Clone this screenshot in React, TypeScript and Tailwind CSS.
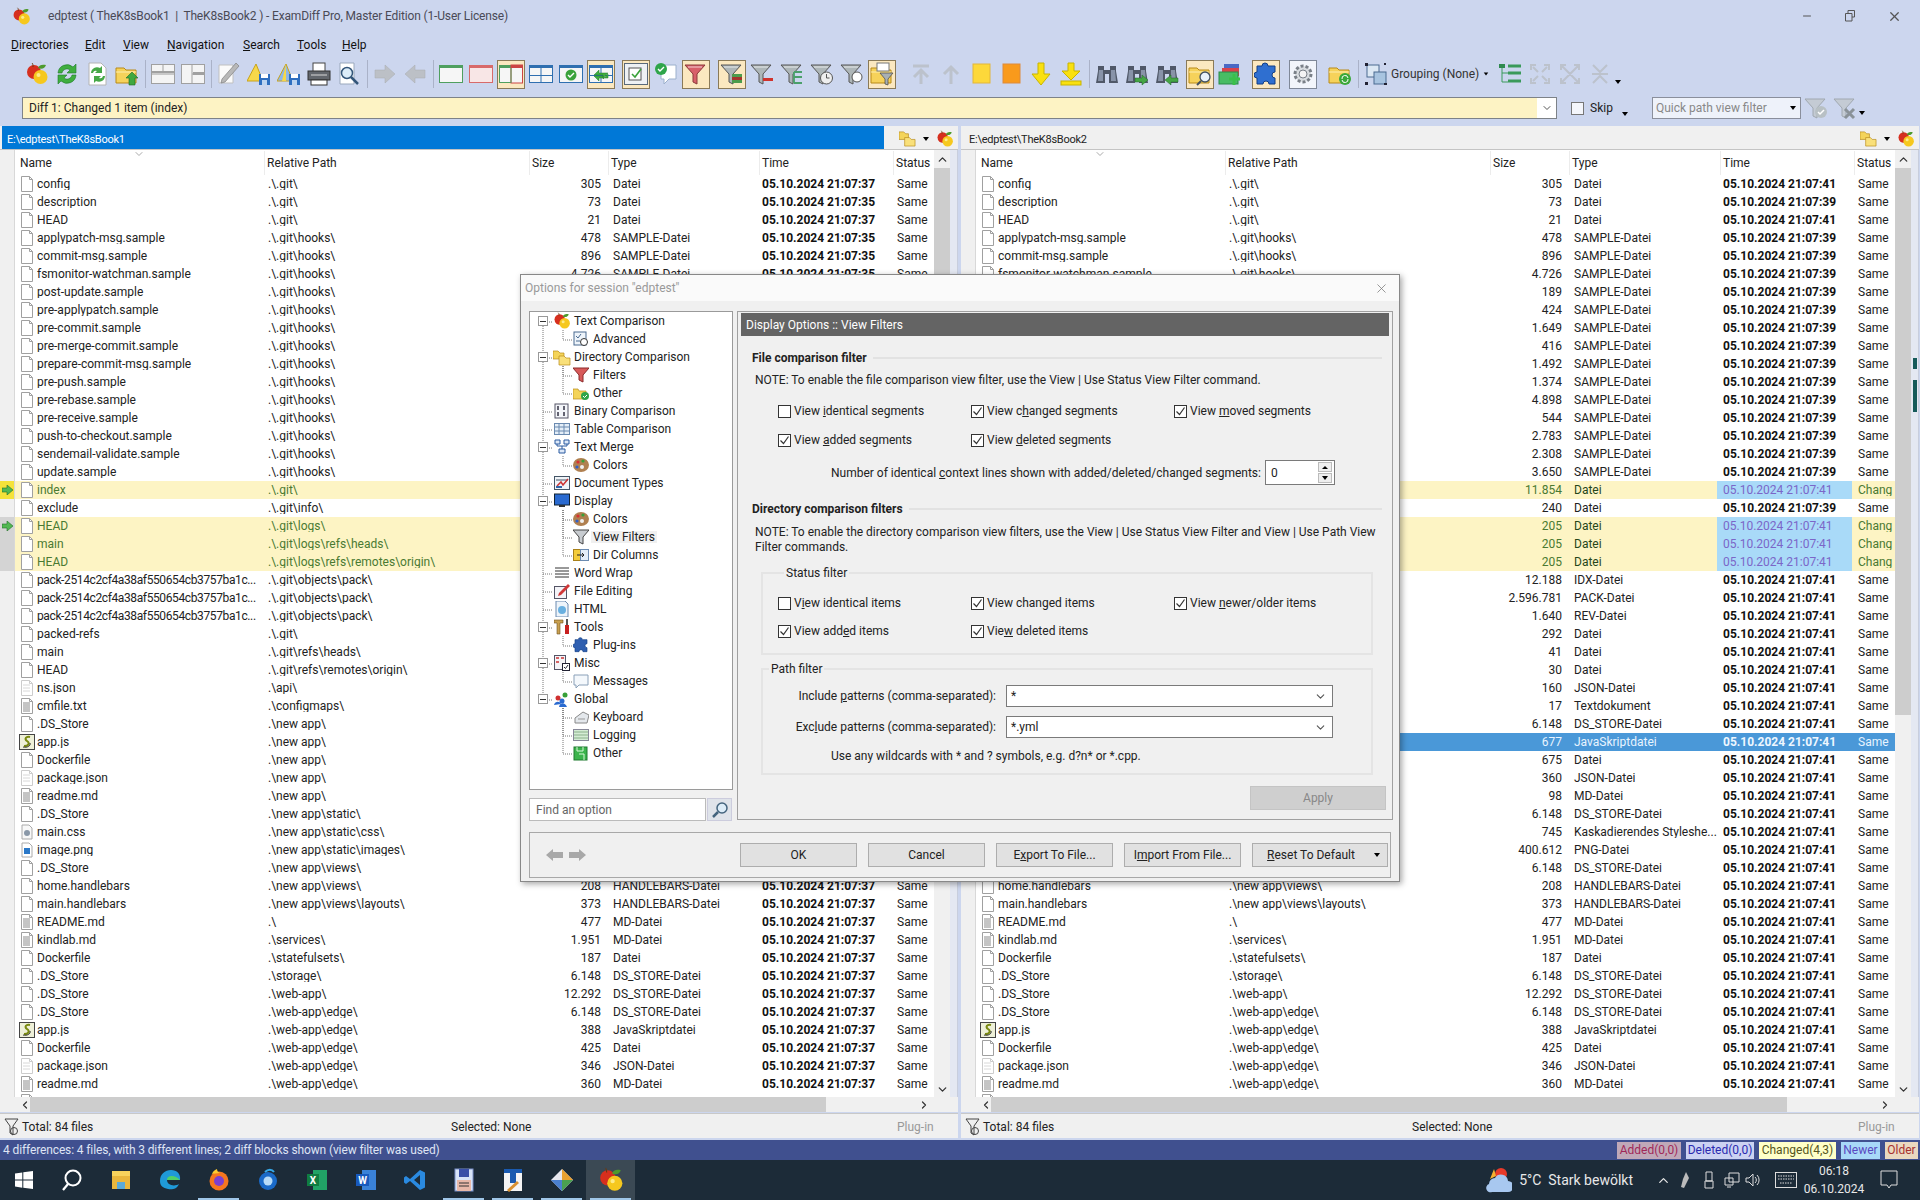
import React from "react";
import { ChevronDown, ChevronLeft, ChevronRight, ChevronUp, Minus, X } from "lucide-react";

type Row = { name: string; path: string; size: string; type: string; t1: string; t2: string; status?: string; icon?: string };

const S = "SAMPLE-Datei";
const rows: Row[] = [
  { name: "config", path: ".\\.git\\", size: "305", type: "Datei", t1: "37", t2: "41" },
  { name: "description", path: ".\\.git\\", size: "73", type: "Datei", t1: "35", t2: "39" },
  { name: "HEAD", path: ".\\.git\\", size: "21", type: "Datei", t1: "37", t2: "41" },
  { name: "applypatch-msg.sample", path: ".\\.git\\hooks\\", size: "478", type: S, t1: "35", t2: "39" },
  { name: "commit-msg.sample", path: ".\\.git\\hooks\\", size: "896", type: S, t1: "35", t2: "39" },
  { name: "fsmonitor-watchman.sample", path: ".\\.git\\hooks\\", size: "4.726", type: S, t1: "35", t2: "39" },
  { name: "post-update.sample", path: ".\\.git\\hooks\\", size: "189", type: S, t1: "35", t2: "39" },
  { name: "pre-applypatch.sample", path: ".\\.git\\hooks\\", size: "424", type: S, t1: "35", t2: "39" },
  { name: "pre-commit.sample", path: ".\\.git\\hooks\\", size: "1.649", type: S, t1: "35", t2: "39" },
  { name: "pre-merge-commit.sample", path: ".\\.git\\hooks\\", size: "416", type: S, t1: "35", t2: "39" },
  { name: "prepare-commit-msg.sample", path: ".\\.git\\hooks\\", size: "1.492", type: S, t1: "35", t2: "39" },
  { name: "pre-push.sample", path: ".\\.git\\hooks\\", size: "1.374", type: S, t1: "35", t2: "39" },
  { name: "pre-rebase.sample", path: ".\\.git\\hooks\\", size: "4.898", type: S, t1: "35", t2: "39" },
  { name: "pre-receive.sample", path: ".\\.git\\hooks\\", size: "544", type: S, t1: "35", t2: "39" },
  { name: "push-to-checkout.sample", path: ".\\.git\\hooks\\", size: "2.783", type: S, t1: "35", t2: "39" },
  { name: "sendemail-validate.sample", path: ".\\.git\\hooks\\", size: "2.308", type: S, t1: "35", t2: "39" },
  { name: "update.sample", path: ".\\.git\\hooks\\", size: "3.650", type: S, t1: "35", t2: "39" },
  { name: "index", path: ".\\.git\\", size: "11.854", type: "Datei", t1: "37", t2: "41", status: "c" },
  { name: "exclude", path: ".\\.git\\info\\", size: "240", type: "Datei", t1: "35", t2: "39" },
  { name: "HEAD", path: ".\\.git\\logs\\", size: "205", type: "Datei", t1: "37", t2: "41", status: "c" },
  { name: "main", path: ".\\.git\\logs\\refs\\heads\\", size: "205", type: "Datei", t1: "37", t2: "41", status: "c" },
  { name: "HEAD", path: ".\\.git\\logs\\refs\\remotes\\origin\\", size: "205", type: "Datei", t1: "37", t2: "41", status: "c" },
  { name: "pack-2514c2cf4a38af550654cb3757ba1c...", path: ".\\.git\\objects\\pack\\", size: "12.188", type: "IDX-Datei", t1: "37", t2: "41" },
  { name: "pack-2514c2cf4a38af550654cb3757ba1c...", path: ".\\.git\\objects\\pack\\", size: "2.596.781", type: "PACK-Datei", t1: "37", t2: "41" },
  { name: "pack-2514c2cf4a38af550654cb3757ba1c...", path: ".\\.git\\objects\\pack\\", size: "1.640", type: "REV-Datei", t1: "37", t2: "41" },
  { name: "packed-refs", path: ".\\.git\\", size: "292", type: "Datei", t1: "37", t2: "41" },
  { name: "main", path: ".\\.git\\refs\\heads\\", size: "41", type: "Datei", t1: "37", t2: "41" },
  { name: "HEAD", path: ".\\.git\\refs\\remotes\\origin\\", size: "30", type: "Datei", t1: "37", t2: "41" },
  { name: "ns.json", path: ".\\api\\", size: "160", type: "JSON-Datei", t1: "37", t2: "41", icon: "faint" },
  { name: "cmfile.txt", path: ".\\configmaps\\", size: "17", type: "Textdokument", t1: "37", t2: "41", icon: "text" },
  { name: ".DS_Store", path: ".\\new app\\", size: "6.148", type: "DS_STORE-Datei", t1: "37", t2: "41" },
  { name: "app.js", path: ".\\new app\\", size: "677", type: "JavaSkriptdatei", t1: "37", t2: "41", icon: "js", status: "s" },
  { name: "Dockerfile", path: ".\\new app\\", size: "675", type: "Datei", t1: "37", t2: "41" },
  { name: "package.json", path: ".\\new app\\", size: "360", type: "JSON-Datei", t1: "37", t2: "41", icon: "faint" },
  { name: "readme.md", path: ".\\new app\\", size: "98", type: "MD-Datei", t1: "37", t2: "41", icon: "text" },
  { name: ".DS_Store", path: ".\\new app\\static\\", size: "6.148", type: "DS_STORE-Datei", t1: "37", t2: "41" },
  { name: "main.css", path: ".\\new app\\static\\css\\", size: "745", type: "Kaskadierendes Styleshe...", t1: "37", t2: "41", icon: "css" },
  { name: "image.png", path: ".\\new app\\static\\images\\", size: "400.612", type: "PNG-Datei", t1: "37", t2: "41", icon: "image" },
  { name: ".DS_Store", path: ".\\new app\\views\\", size: "6.148", type: "DS_STORE-Datei", t1: "37", t2: "41" },
  { name: "home.handlebars", path: ".\\new app\\views\\", size: "208", type: "HANDLEBARS-Datei", t1: "37", t2: "41" },
  { name: "main.handlebars", path: ".\\new app\\views\\layouts\\", size: "373", type: "HANDLEBARS-Datei", t1: "37", t2: "41" },
  { name: "README.md", path: ".\\", size: "477", type: "MD-Datei", t1: "37", t2: "41", icon: "text" },
  { name: "kindlab.md", path: ".\\services\\", size: "1.951", type: "MD-Datei", t1: "37", t2: "41", icon: "text" },
  { name: "Dockerfile", path: ".\\statefulsets\\", size: "187", type: "Datei", t1: "37", t2: "41" },
  { name: ".DS_Store", path: ".\\storage\\", size: "6.148", type: "DS_STORE-Datei", t1: "37", t2: "41" },
  { name: ".DS_Store", path: ".\\web-app\\", size: "12.292", type: "DS_STORE-Datei", t1: "37", t2: "41" },
  { name: ".DS_Store", path: ".\\web-app\\edge\\", size: "6.148", type: "DS_STORE-Datei", t1: "37", t2: "41" },
  { name: "app.js", path: ".\\web-app\\edge\\", size: "388", type: "JavaSkriptdatei", t1: "37", t2: "41", icon: "js" },
  { name: "Dockerfile", path: ".\\web-app\\edge\\", size: "425", type: "Datei", t1: "37", t2: "41" },
  { name: "package.json", path: ".\\web-app\\edge\\", size: "346", type: "JSON-Datei", t1: "37", t2: "41", icon: "faint" },
  { name: "readme.md", path: ".\\web-app\\edge\\", size: "360", type: "MD-Datei", t1: "37", t2: "41", icon: "text" },
  { name: "", path: "", size: "", type: "", t1: "", t2: "" },
];

const Apples = ({ s = 24 }: { s?: number }) => (
  <svg width={s} height={s} viewBox="0 0 24 24">
    <circle cx="9" cy="10" r="7" fill="#d62f1e" />
    <circle cx="15.5" cy="15" r="7" fill="#f6c81e" />
    <circle cx="13.5" cy="13" r="2" fill="#fdeb8a" />
    <path d="M13 6c1-3 4-4 8-3-1 3-4 5-8 3z" fill="#4d9a2c" />
    <path d="M8 5c0-2 0-3-1-4" stroke="#6b3a12" fill="none" />
  </svg>
);

const Pane = ({ a = "#4f9f5f", b, split, bg = "#f6f6f6", children }: { a?: string; b?: string; split?: "v" | "h" | "c"; bg?: string; children?: React.ReactNode }) => (
  <svg width="24" height="24" viewBox="0 0 24 24">
    <rect x="0.5" y="3.5" width="23" height="17" fill={bg} stroke={a} />
    <rect x="1" y="3" width="22" height="3" fill={a} />
    {b && <rect x="12" y="3" width="11.5" height="18" fill={bg} stroke={b} />}
    {b && <rect x="12" y="3" width="12" height="3" fill={b} />}
    {split === "v" && <path d="M12 6v15" stroke={a} />}
    {split === "h" && <path d="M0 13.5h24" stroke={a} />}
    {split === "c" && <path d="M12 6v15M0 13.5h24" stroke={a} />}
    {children}
  </svg>
);

const Funnel = ({ fill = "#aeb6b8", line = "#555", children }: { fill?: string; line?: string; children?: React.ReactNode }) => (
  <svg width="24" height="24" viewBox="0 0 24 24">
    <path d="M1 3h20l-8 9v10l-4-2v-8z" fill={fill} stroke={line} />
    <path d="M4 5h14" stroke="#fff" strokeOpacity=".7" />
    {children}
  </svg>
);

const Folder = ({ children }: { children?: React.ReactNode }) => (
  <svg width="24" height="24" viewBox="0 0 24 24">
    <path d="M1 6h8l2 2h10v13H1z" fill="#f6d25a" stroke="#b88a18" />
    <path d="M1 10h20" stroke="#fdeeb0" />
    {children}
  </svg>
);

const BlockArrow = ({ dir, fill }: { dir: "l" | "r" | "u" | "d"; fill: string }) => {
  const rot = { l: 180, r: 0, u: 270, d: 90 }[dir];
  return (
    <svg width="24" height="24" viewBox="0 0 24 24">
      <path d="M2 8h10V3l10 9-10 9v-5H2z" fill={fill} stroke="#a8acb0" strokeOpacity=".5" transform={`rotate(${rot} 12 12)`} />
    </svg>
  );
};

const Binoc = ({ arrow }: { arrow?: "r" | "l" }) => (
  <svg width="24" height="24" viewBox="0 0 24 24">
    <path d="M3 4h6v4h6V4h6v5l2 12h-9v-9h-4v9H1l2-12z" fill="#505868" />
    <path d="M4 8h4v11H3zM16 8h4l1 11h-5z" fill="#8893a8" />
    {arrow === "r" && <path d="M10 16h7v-3l6 5-6 5v-3h-7z" fill="#45a545" stroke="#1f6a24" strokeWidth=".5" />}
    {arrow === "l" && <path d="M23 16h-7v-3l-6 5 6 5v-3h7z" fill="#45a545" stroke="#1f6a24" strokeWidth=".5" />}
  </svg>
);

const Gray = ({ d, w = 3 }: { d: string; w?: number }) => (
  <svg width="24" height="24" viewBox="0 0 24 24">
    <path d={d} fill="none" stroke="#bcc2cc" strokeWidth={w} />
  </svg>
);

const icons: Record<string, React.ReactNode> = {
  apples: <Apples />,
  refresh: (
    <svg width="24" height="24" viewBox="0 0 24 24">
      <path d="M3 11a9 9 0 0 1 15-6l3-3v9h-9l3-3a5 5 0 0 0-8 3z" fill="#3fae3f" stroke="#1f7a2a" strokeWidth=".6" />
      <path d="M21 13a9 9 0 0 1-15 6l-3 3v-9h9l-3 3a5 5 0 0 0 8-3z" fill="#3fae3f" stroke="#1f7a2a" strokeWidth=".6" />
    </svg>
  ),
  docRefresh: (
    <svg width="24" height="24" viewBox="0 0 24 24">
      <path d="M4 1h12l5 5v17H4z" fill="#fff" stroke="#b4b4b4" />
      <path d="M6 11a6 6 0 0 1 9-5l2-2v7h-7l2-2a3 3 0 0 0-4 2z" fill="#46a846" />
      <path d="M20 14a6 6 0 0 1-9 5l-2 2v-7h7l-2 2a3 3 0 0 0 4-2z" fill="#46a846" />
    </svg>
  ),
  folderUp: (
    <Folder>
      <path d="M17 10l6 6h-3v7h-6v-7h-3z" fill="#3fa83f" stroke="#1f6a24" strokeWidth=".6" />
    </Folder>
  ),
  panesH: (
    <svg width="24" height="24" viewBox="0 0 24 24">
      <rect x="0.5" y="2.5" width="23" height="19" fill="#f4f4f4" stroke="#a0a0a0" />
      <path d="M0 10h24" stroke="#a0a0a0" strokeWidth="2" />
      <path d="M12 2v8" stroke="#a0a0a0" />
      <rect x="1" y="11" width="22" height="2" fill="#c8c8c8" />
    </svg>
  ),
  panesV: (
    <svg width="24" height="24" viewBox="0 0 24 24">
      <rect x="0.5" y="2.5" width="23" height="19" fill="#f4f4f4" stroke="#a0a0a0" />
      <path d="M11 2v20M11 12h13" stroke="#a0a0a0" />
      <rect x="12" y="10" width="11" height="3" fill="#a0a0a0" />
    </svg>
  ),
  pencil: (
    <svg width="24" height="24" viewBox="0 0 24 24">
      <path d="M2 3h14v18H2z" fill="#fafafa" stroke="#c0c0c0" />
      <path d="M19 1l3 3L8 20l-4 1 1-4z" fill="#b8b8b8" stroke="#808080" strokeWidth=".7" />
    </svg>
  ),
  warnSave: (
    <svg width="24" height="24" viewBox="0 0 24 24">
      <path d="M9 2L0 19h16z" fill="#f7d84a" stroke="#c8a21a" />
      <rect x="12" y="12" width="11" height="11" fill="#2f6fc0" />
      <rect x="14" y="12" width="7" height="4" fill="#fff" />
      <rect x="15" y="18" width="5" height="5" fill="#bcd4f0" />
    </svg>
  ),
  warnSave2: (
    <svg width="24" height="24" viewBox="0 0 24 24">
      <path d="M9 2L0 19h16z" fill="#8fb7e8" stroke="#c8a21a" />
      <path d="M9 2L5 19h4z" fill="#f7d84a" />
      <rect x="12" y="12" width="11" height="11" fill="#2f6fc0" />
      <rect x="14" y="12" width="7" height="4" fill="#fff" />
      <rect x="15" y="18" width="5" height="5" fill="#bcd4f0" />
    </svg>
  ),
  printer: (
    <svg width="24" height="24" viewBox="0 0 24 24">
      <rect x="6" y="1" width="12" height="9" fill="#fff" stroke="#444" />
      <rect x="1" y="9" width="22" height="9" fill="#62666c" stroke="#333" />
      <rect x="4" y="18" width="16" height="5" fill="#fff" stroke="#333" />
      <path d="M4 13h16" stroke="#d8d8d8" />
    </svg>
  ),
  preview: (
    <svg width="24" height="24" viewBox="0 0 24 24">
      <path d="M3 1h14v21H3z" fill="#fff" stroke="#9aa8bc" />
      <circle cx="10" cy="11" r="5.5" fill="#dcecf8" stroke="#34567a" strokeWidth="1.5" />
      <path d="M14 15l7 7" stroke="#34567a" strokeWidth="2.5" />
    </svg>
  ),
  arrowR: <BlockArrow dir="r" fill="#bcc0c6" />,
  arrowL: <BlockArrow dir="l" fill="#bcc0c6" />,
  paneGreen: <Pane />,
  paneRed: <Pane a="#d86a6a" bg="#f8e6e6" />,
  paneBoth: <Pane b="#c44" split="v" />,
  paneBlue: <Pane a="#2f6fb0" split="c" />,
  paneCheck: (
    <Pane a="#2f6fb0">
      <circle cx="12" cy="13" r="5.5" fill="#3aa23a" />
      <path d="M9 13l2 2 4-4" stroke="#fff" fill="none" strokeWidth="1.4" />
    </Pane>
  ),
  paneSwap: (
    <Pane a="#2f6fb0" split="c">
      <path d="M5 13l5-5v3h9l-5 5v-3z" fill="#3fae3f" stroke="#1f7a2a" strokeWidth=".5" />
      <path d="M19 12l-5 5v-3H5l5 5v-3h9z" fill="#3fae3f" stroke="#1f7a2a" strokeWidth=".5" />
    </Pane>
  ),
  paneDoc: (
    <svg width="24" height="24" viewBox="0 0 24 24">
      <rect x="0.5" y="1.5" width="23" height="21" fill="#eef1f4" stroke="#5a6a7a" />
      <rect x="5" y="6" width="12" height="12" fill="#fff" stroke="#555" />
      <path d="M8 12l3 3 6-8" fill="none" stroke="#3aa23a" strokeWidth="1.6" />
    </svg>
  ),
  speech: (
    <svg width="24" height="24" viewBox="0 0 24 24">
      <path d="M7 3h15v14h-7l-5 5v-5H7z" fill="#fff" stroke="#9cb0cc" />
      <circle cx="7" cy="7" r="6" fill="#2fa54a" />
      <path d="M4 7l2 2 4-4" stroke="#fff" fill="none" strokeWidth="1.4" />
    </svg>
  ),
  funnelRed: <Funnel fill="#d8606a" line="#8a3a3a" />,
  funnelMinus: (
    <Funnel>
      <rect x="12" y="12" width="10" height="3" fill="#4c9c4c" />
      <rect x="12" y="15" width="10" height="3" fill="#a5352c" />
      <rect x="12" y="18" width="10" height="3" fill="#4c9c4c" />
    </Funnel>
  ),
  funnelDel: (
    <Funnel>
      <rect x="13" y="16" width="10" height="3" fill="#d0322c" />
    </Funnel>
  ),
  funnelE: (
    <Funnel>
      <path d="M14 10h8M14 15h8M14 21h8M14 10v11" stroke="#4ba06a" strokeWidth="1.8" fill="none" />
    </Funnel>
  ),
  funnelClock: (
    <Funnel>
      <circle cx="16.5" cy="16" r="6" fill="#eee" stroke="#555" />
      <path d="M16.5 12v4h3" stroke="#555" fill="none" />
    </Funnel>
  ),
  funnelO: (
    <Funnel>
      <circle cx="17" cy="15" r="5" fill="#fff" stroke="#555" />
    </Funnel>
  ),
  funnelCheck: (
    <svg width="24" height="24" viewBox="0 0 24 24">
      <path d="M1 3h20l-8 9v10l-4-2v-8z" fill="#c4cbd4" stroke="#a0a8b0" />
      <circle cx="17" cy="16" r="6" fill="#b8c0c4" />
      <path d="M14 16l2 2 4-4" stroke="#fff" fill="none" strokeWidth="1.5" />
    </svg>
  ),
  funnelX: (
    <svg width="24" height="24" viewBox="0 0 24 24">
      <path d="M1 3h20l-8 9v10l-4-2v-8z" fill="#c4cbd4" stroke="#a0a8b0" />
      <path d="M12 13l9 9m0-9l-9 9" stroke="#8a9298" strokeWidth="3" />
    </svg>
  ),
  folderFunnel: (
    <Folder>
      <rect x="7" y="1" width="12" height="8" fill="#fff" stroke="#777" />
      <path d="M10 11h13l-5 6v6l-3-1v-5z" fill="#a8b0b4" stroke="#444" strokeWidth=".7" />
    </Folder>
  ),
  upTop: <Gray d="M4 4h16M12 22V9M5 15l7-7 7 7" />,
  up: <Gray d="M12 22V5M5 12l7-7 7 7" />,
  squareY: (
    <svg width="24" height="24" viewBox="0 0 24 24">
      <rect x="4" y="2" width="17" height="19" fill="#fdd83a" stroke="#e2b63a" />
    </svg>
  ),
  squareO: (
    <svg width="24" height="24" viewBox="0 0 24 24">
      <rect x="4" y="2" width="17" height="19" fill="#f99a1c" stroke="#dd8a3a" />
    </svg>
  ),
  downY: (
    <svg width="24" height="24" viewBox="0 0 24 24">
      <path d="M9 1h6v11h6l-9 11-9-11h6z" fill="#f9e010" stroke="#c8b400" />
    </svg>
  ),
  downBottomY: (
    <svg width="24" height="24" viewBox="0 0 24 24">
      <path d="M9 1h6v8h6l-9 9-9-9h6z" fill="#f9e010" stroke="#c8b400" />
      <rect x="2" y="19" width="20" height="4" fill="#f9e010" stroke="#c8b400" />
    </svg>
  ),
  binoc: <Binoc />,
  binocR: <Binoc arrow="r" />,
  binocL: <Binoc arrow="l" />,
  folderFind: (
    <Folder>
      <circle cx="17" cy="15" r="5" fill="#e8f2fa" stroke="#405060" strokeWidth="1.3" />
      <path d="M13 19l-4 4" stroke="#405060" strokeWidth="2" />
    </Folder>
  ),
  foldersPlus: (
    <svg width="24" height="24" viewBox="0 0 24 24">
      <rect x="6" y="2" width="15" height="8" fill="#4a68c4" />
      <rect x="4" y="6" width="17" height="8" fill="#d8424c" />
      <rect x="1" y="10" width="19" height="12" fill="#48bc64" stroke="#2a8a48" />
      <path d="M16 12v11M11 17h11" stroke="#3ac04a" strokeWidth="3" />
    </svg>
  ),
  puzzle: (
    <svg width="24" height="24" viewBox="0 0 24 24">
      <path d="M3 4h5a3 3 0 1 1 6 0h7v6a3 3 0 1 0 0 6v6h-6a3 3 0 1 0-6 0H3v-6a3 3 0 1 1 0-6z" fill="#2f6fd0" stroke="#123f86" />
    </svg>
  ),
  gear: (
    <svg width="24" height="24" viewBox="0 0 24 24">
      <circle cx="12" cy="12" r="8" fill="#d8dce0" stroke="#7a8088" strokeWidth="3" strokeDasharray="3 2" />
      <circle cx="12" cy="12" r="4" fill="#f4f4f4" stroke="#7a8088" />
    </svg>
  ),
  folderRefresh: (
    <Folder>
      <circle cx="17" cy="17" r="6" fill="#3aa83a" />
      <path d="M14 17a3 3 0 0 1 6-1M20 17a3 3 0 0 1-6 1" stroke="#fff" fill="none" />
    </Folder>
  ),
  grouping: (
    <svg width="24" height="24" viewBox="0 0 24 24">
      <rect x="3" y="3" width="12" height="12" fill="#dce8f4" stroke="#4a6a90" />
      <rect x="10" y="10" width="12" height="12" fill="#a8c4e0" stroke="#4a6a90" />
      <path d="M1 1h3v3H1zM20 1h2v2h-2zM1 20h3v3H1zM20 21h3v2h-3z" fill="#223" />
    </svg>
  ),
  listTree: (
    <svg width="24" height="24" viewBox="0 0 24 24">
      <path d="M4 3v17h6M4 11h6" stroke="#3a9a5a" fill="none" />
      <path d="M1 2h6v4H1z" fill="#2f8a4f" />
      <path d="M10 4h13M10 11h13M10 19h13" stroke="#3a9a5a" strokeWidth="3" />
    </svg>
  ),
  expand1: <Gray w={2} d="M3 8V3h5M21 8V3h-5M3 16v5h5M21 16v5h-5M5 5l5 5M19 5l-5 5M5 19l5-5M19 19l-5-5" />,
  expand2: <Gray w={2} d="M3 3l18 18M21 3L3 21M3 8V3h5M21 8V3h-5M3 16v5h5M21 16v5h-5" />,
  expand3: <Gray w={2} d="M5 3l7 7 7-7M5 21l7-7 7 7M4 12h16" />,
};

// small option tree pictures, 16px
const Mini = ({ n }: { n: string }) => {
  const c: Record<string, React.ReactNode> = {
    apples: <Apples s={18} />,
    advanced: (
      <svg width="16" height="16" viewBox="0 0 16 16">
        <rect x="1" y="1" width="12" height="13" fill="#eef4fa" stroke="#4a6a90" />
        <path d="M3 5l2 2 3-4M3 10h4" stroke="#4a6a90" fill="none" />
        <circle cx="11" cy="11" r="3.5" fill="#fff" stroke="#333" />
      </svg>
    ),
    dirs: (
      <svg width="18" height="18" viewBox="0 0 18 18">
        <path d="M0 3h5l2 2h4v6H0z" fill="#f4d45a" stroke="#b88a18" strokeWidth=".7" />
        <path d="M6 8h5l2 2h4v7H6z" fill="#f9e07a" stroke="#b88a18" strokeWidth=".7" />
      </svg>
    ),
    filters: (
      <svg width="16" height="16" viewBox="0 0 16 16">
        <path d="M0 1h16l-6 7v7l-4-2V8z" fill="#d85a5a" stroke="#8a2a2a" />
      </svg>
    ),
    otherFolder: (
      <svg width="16" height="16" viewBox="0 0 16 16">
        <path d="M0 4h5l1 2h7v8H0z" fill="#f4d45a" stroke="#b88a18" strokeWidth=".7" />
        <circle cx="12" cy="11" r="4" fill="#2fa54a" />
        <path d="M10 11l1.5 1.5L14 10" stroke="#fff" fill="none" />
      </svg>
    ),
    binary: (
      <svg width="16" height="16" viewBox="0 0 16 16">
        <rect x="1" y="1" width="13" height="14" fill="#f4f6fa" stroke="#556" />
        <path d="M4 3v4M10 3v4M4 9v4M10 9v4" stroke="#334" strokeWidth="1.5" />
      </svg>
    ),
    table: (
      <svg width="16" height="16" viewBox="0 0 16 16">
        <rect x="0.5" y="2.5" width="15" height="11" fill="#e4eef8" stroke="#6a8ab0" />
        <path d="M5 3v10M10 3v10M0 6h15M0 10h15" stroke="#6a8ab0" />
      </svg>
    ),
    merge: (
      <svg width="16" height="16" viewBox="0 0 16 16">
        <path d="M1 1h5v4H1zM10 1h5v4h-5zM5 10h6v4H5z" fill="#dce8f8" stroke="#2a5aa0" />
        <path d="M3 5v2h10V5M8 7v3" fill="none" stroke="#2a5aa0" />
      </svg>
    ),
    colors: (
      <svg width="16" height="16" viewBox="0 0 16 16">
        <ellipse cx="8" cy="8" rx="8" ry="7" fill="#b08050" />
        <circle cx="5" cy="5" r="1.6" fill="#d83030" />
        <circle cx="10" cy="4" r="1.6" fill="#38a038" />
        <circle cx="4" cy="10" r="1.6" fill="#3060c8" />
        <circle cx="9" cy="10" r="2" fill="#f0f0f0" />
      </svg>
    ),
    docTypes: (
      <svg width="16" height="16" viewBox="0 0 16 16">
        <rect x="0.5" y="1.5" width="15" height="13" fill="#f0f4f8" stroke="#456" />
        <path d="M2 5h12" stroke="#456" />
        <path d="M3 11l4-4 2 3 5-6" stroke="#c33" fill="none" strokeWidth="1.5" />
        <rect x="2" y="11" width="6" height="2" fill="#36a" />
      </svg>
    ),
    display: (
      <svg width="16" height="16" viewBox="0 0 16 16">
        <rect x="0.5" y="1" width="15" height="11" fill="#2a6ad0" stroke="#123" />
        <rect x="5" y="12" width="6" height="2" fill="#333" />
      </svg>
    ),
    viewFilters: (
      <svg width="16" height="16" viewBox="0 0 16 16">
        <path d="M0 1h16l-6 7v7l-4-2V8z" fill="#c8ccd0" stroke="#444" />
      </svg>
    ),
    columns: (
      <svg width="16" height="16" viewBox="0 0 16 16">
        <rect x="0.5" y="2.5" width="7" height="11" fill="#f4cc3a" stroke="#a8801a" />
        <rect x="7.5" y="2.5" width="8" height="11" fill="#e4eef8" stroke="#6a8ab0" />
        <path d="M4 8h7m-2-2l2 2-2 2" stroke="#222" fill="none" />
      </svg>
    ),
    wrap: (
      <svg width="16" height="16" viewBox="0 0 16 16">
        <path d="M1 3h14M1 6h14M1 9h14M1 12h14" stroke="#333" />
      </svg>
    ),
    edit: (
      <svg width="16" height="16" viewBox="0 0 16 16">
        <rect x="0.5" y="3.5" width="12" height="12" fill="#f4f4f8" stroke="#556" />
        <path d="M14 1l2 2-9 9-3 1 1-3z" fill="#d03838" />
      </svg>
    ),
    html: (
      <svg width="16" height="16" viewBox="0 0 16 16">
        <path d="M2 0h9l3 3v13H2z" fill="#eef4fa" stroke="#6a8ab0" />
        <circle cx="8" cy="9" r="4" fill="#6ab0e0" />
      </svg>
    ),
    tools: (
      <svg width="16" height="16" viewBox="0 0 16 16">
        <path d="M0 1h9v3H6v11H3V4H0z" fill="#c8a050" stroke="#705020" strokeWidth=".6" />
        <rect x="12" y="0" width="2" height="6" fill="#555" />
        <rect x="11" y="6" width="4" height="9" fill="#c82020" />
      </svg>
    ),
    plug: (
      <svg width="16" height="16" viewBox="0 0 24 24">
        <path d="M3 4h5a3 3 0 1 1 6 0h7v6a3 3 0 1 0 0 6v6h-6a3 3 0 1 0-6 0H3v-6a3 3 0 1 1 0-6z" fill="#2f5fb0" stroke="#123f86" />
      </svg>
    ),
    misc: (
      <svg width="16" height="16" viewBox="0 0 16 16">
        <rect x="0.5" y="0.5" width="11" height="14" fill="#f4f4f8" stroke="#556" />
        <path d="M2 3h3M7 3h3M2 7h3" stroke="#c33" strokeWidth="1.5" />
        <rect x="8.5" y="8.5" width="7" height="7" fill="#fff" stroke="#223" />
        <path d="M10 12l1.5 1.5L14 10" stroke="#223" fill="none" />
      </svg>
    ),
    messages: (
      <svg width="16" height="16" viewBox="0 0 16 16">
        <path d="M1 2h14v10H6l-3 3v-3H1z" fill="#f4f8fc" stroke="#8aa0b8" />
      </svg>
    ),
    global: (
      <svg width="16" height="16" viewBox="0 0 16 16">
        <circle cx="4" cy="7" r="2.5" fill="#d03030" />
        <circle cx="11" cy="4" r="2.5" fill="#38a038" />
        <circle cx="8" cy="10" r="2.5" fill="#2a6ad0" />
        <path d="M0 14c1-4 6-4 7-1M5 16c1-5 6-5 8 0" fill="#2a6ad0" />
      </svg>
    ),
    keyboard: (
      <svg width="16" height="16" viewBox="0 0 16 16">
        <path d="M2 9l8-6 6 3-2 8H2z" fill="#e4e8ec" stroke="#888" />
        <path d="M5 10h7" stroke="#999" />
      </svg>
    ),
    logging: (
      <svg width="16" height="16" viewBox="0 0 16 16">
        <rect x="0.5" y="2.5" width="15" height="11" fill="#d4ecd4" stroke="#889" />
        <path d="M1 5h14M1 8h14M1 11h14" stroke="#8ab08a" />
      </svg>
    ),
    otherGreen: (
      <svg width="16" height="16" viewBox="0 0 16 16">
        <rect x="1" y="2" width="13" height="13" fill="#3cb44c" stroke="#1f7a2f" />
        <path d="M4 2v4h6V2M6 9h5v6" stroke="#d8f8d8" fill="none" />
      </svg>
    ),
  };
  return <>{c[n]}</>;
};

const Tool = ({ n, hl, white }: { n: string; hl?: boolean; white?: boolean }) => (
  <div className="w-[30px] h-[34px] flex items-center justify-center shrink-0">
    <div
      className={
        "w-[28px] h-[29px] flex items-center justify-center " +
        (hl ? "bg-[#fbe8c0] border border-[#8a7a58]" : white ? "bg-[#f2f5fb] border border-[#7f8898]" : "")
      }
    >
      {icons[n]}
    </div>
  </div>
);
const Sep = () => (
  <div className="w-[6px] h-[28px] flex justify-center shrink-0">
    <div className="w-px h-full bg-[#aab2c8]" />
  </div>
);
const Gripper = () => (
  <div className="w-[5px] h-[27px] shrink-0 [background-image:radial-gradient(#7d8496_45%,transparent_50%)] [background-size:2px_2px]" />
);
const Caret = () => <div className="w-0 h-0 border-x-[3.5px] border-x-transparent border-t-[4px] border-t-black shrink-0" />;

const FileIcon = ({ kind }: { kind?: string }) => {
  if (kind === "js")
    return (
      <svg width="16" height="16" viewBox="0 0 16 16">
        <rect x="0.5" y="0.5" width="15" height="15" fill="#eef0d8" stroke="#444" />
        <path d="M11 3C7 2 5 5 8 7s2 5-3 5" fill="none" stroke="#7a8a10" strokeWidth="2" />
        <path d="M4 13c4 1 8-1 7-4" fill="none" stroke="#333" />
      </svg>
    );
  if (kind === "css")
    return (
      <svg width="16" height="16" viewBox="0 0 16 16">
        <path d="M3 1h7l3 3v11H3z" fill="#f8f8f8" stroke="#aaa" />
        <circle cx="8" cy="9" r="3" fill="#8a98a8" />
      </svg>
    );
  if (kind === "image")
    return (
      <svg width="16" height="16" viewBox="0 0 16 16">
        <path d="M3 1h7l3 3v11H3z" fill="#fff" stroke="#aaa" />
        <rect x="5" y="6" width="6" height="6" fill="#2a78c8" />
      </svg>
    );
  return (
    <svg width="16" height="16" viewBox="0 0 16 16">
      <path d="M2.5 0.5h8l3 3v12h-11z" fill="#fff" stroke={kind === "faint" ? "#ccc" : "#a0a0a0"} />
      <path d="M10.5 0.5v3h3" fill="none" stroke={kind === "faint" ? "#ccc" : "#a0a0a0"} />
      {kind === "text" && <path d="M4 5h7M4 7h7M4 9h7M4 11h7M4 13h7" stroke="#8a8a8a" />}
      {kind === "faint" && <path d="M4 5h7M4 8h7M4 11h7" stroke="#d8d8d8" />}
    </svg>
  );
};

const GreenArrow = () => (
  <svg width="11" height="10" viewBox="0 0 11 10">
    <path d="M0 3h5V0l6 5-6 5V7H0z" fill="#52b852" stroke="#24702a" strokeWidth=".6" />
  </svg>
);

const Panel = ({ side }: { side: "l" | "r" }) => {
  const left = side === "l";
  return (
    <div className="w-[958px] flex flex-col shrink-0">
      <div className="h-[24px] flex items-center bg-[#f0f0f0] border-b border-[#c4c4c4]">
        <div
          className={
            "h-full flex items-center pt-[3px] text-[11px] tracking-[-0.25px] " +
            (left ? "bg-[#0078d7] text-white ml-[2px] w-[882px] pl-[5px]" : "w-[884px] text-[#222] pl-[8px]")
          }
        >
          {left ? "E:\\edptest\\TheK8sBook1" : "E:\\edptest\\TheK8sBook2"}
        </div>
        <div className="ml-[15px] flex items-center gap-[7px] pt-[2px]">
          <svg width="17" height="17" viewBox="0 0 18 18">
            <path d="M0 2h5l2 2h3v6H0z" fill="#f4d45a" stroke="#b88a18" strokeWidth=".7" />
            <path d="M6 8h5l2 2h4v7H6z" fill="#f9e07a" stroke="#b88a18" strokeWidth=".7" />
          </svg>
          <Caret />
          <Apples s={18} />
        </div>
      </div>
      <div className="flex-1 flex min-h-0">
        <div className="w-[15px] shrink-0 bg-[#f0f0f0] border-r border-[#d8d8d8] flex flex-col">
          <div className="h-[25px]" />
          <div className="h-[306px]" />
          <div className={"h-[18px] flex items-center justify-center " + (left ? "bg-[#f5e23a]" : "bg-[#f0f0f0]")}>
            {left && <GreenArrow />}
          </div>
          <div className="h-[18px]" />
          <div className="h-[54px] bg-[#d4d4d4] flex items-start justify-center pt-[4px]">{left && <GreenArrow />}</div>
        </div>
        <div className="flex-1 flex flex-col min-w-0 bg-white">
          <div className="h-[25px] flex items-center relative shrink-0 text-[#222] pt-[1px]">
            <div className="w-[250px] pl-[5px] border-r border-[#ececec] h-full flex items-center">Name</div>
            <div className="w-[265px] pl-[2px] border-r border-[#ececec] h-full flex items-center">Relative Path</div>
            <div className="w-[79px] pl-[2px] border-r border-[#ececec] h-full flex items-center">Size</div>
            <div className="w-[151px] pl-[2px] border-r border-[#ececec] h-full flex items-center">Type</div>
            <div className="w-[134px] pl-[2px] border-r border-[#ececec] h-full flex items-center">Time</div>
            <div className="pl-[2px]">Status</div>
            <ChevronDown size={12} className="absolute left-[118px] top-[-2px] text-[#aaa]" />
          </div>
          <div className="h-[923px] overflow-hidden">
            {rows.map((r, i) => {
              const changed = r.status === "c";
              const sel = !left && r.status === "s";
              return (
                <div
                  key={i}
                  className={
                    "h-[18px] flex items-center w-[919px] whitespace-nowrap " +
                    (sel ? "bg-[#4a98d8] text-[#e8f4ff] " : changed ? "bg-[#fdf4c4] " : "") +
                    (changed ? "text-[#4a7a32]" : sel ? "" : "text-[#222]")
                  }
                >
                  <div className="w-[20px] flex justify-center shrink-0 pl-[3px]">
                    <FileIcon kind={r.icon} />
                  </div>
                  <div className={"w-[231px] pl-[2px] shrink-0 overflow-hidden " + (r.name.startsWith("pack-") ? "tracking-[-0.38px]" : "")}>{r.name}</div>
                  <div className="w-[263px] pl-[2px] shrink-0 overflow-hidden">{r.path}</div>
                  <div className="w-[72px] shrink-0 text-right">{r.size}</div>
                  <div className={"w-[155px] pl-[12px] shrink-0 overflow-hidden " + (changed ? "text-[#26461a]" : "")}>{r.type}</div>
                  <div
                    className={
                      "w-[135px] h-full flex items-center pl-[6px] shrink-0 " +
                      (changed ? "bg-[#a9daf8] text-[#7b66c8] " : "font-bold ") +
                      (sel ? "text-[#eef7ff]" : changed ? "" : "text-[#111]")
                    }
                  >
                    {r.t1 && `05.10.2024 21:07:${left ? r.t1 : r.t2}`}
                  </div>
                  <div className="pl-[6px] flex-1 overflow-hidden">{changed ? "Chang" : r.name ? "Same" : ""}</div>
                </div>
              );
            })}
          </div>
        </div>
        <div className="w-[16px] shrink-0 flex flex-col bg-[#f0f0f0]">
          <div className="h-[18px] flex items-center justify-center">
            <ChevronUp size={13} className="text-[#333]" strokeWidth={2.4} />
          </div>
          <div className="h-[547px] bg-[#cdcdcd]" />
          <div className="flex-1" />
          <div className="h-[16px] flex items-center justify-center">
            <ChevronDown size={13} className="text-[#333]" strokeWidth={2.4} />
          </div>
        </div>
        <div className="w-[8px] shrink-0 bg-[#e4e8f2] flex flex-col pl-[2px] border-r border-[#c8cedd]">
          <div className="h-[208px]" />
          <div className="h-[11px] w-[4px] bg-[#155a5a]" />
          <div className="h-[11px]" />
          <div className="h-[32px] w-[4px] bg-[#155a5a]" />
        </div>
      </div>
      <div className="h-[15px] flex items-center bg-[#f0f0f0] shrink-0 pl-[19px] pr-[28px] text-[#333]">
        <ChevronLeft size={12} strokeWidth={2.4} />
        <div className="h-full w-[796px] ml-[-1px] bg-[#cdcdcd]" />
        <div className="flex-1" />
        <ChevronRight size={12} strokeWidth={2.4} />
      </div>
      <div className="h-[25px] flex items-center bg-[#f0f0f0] border-t border-[#c8c8c8] mt-[1px] shrink-0 relative pt-[2px]">
        <div className="ml-[4px] w-[18px] shrink-0">
          <svg width="17" height="19" viewBox="0 0 17 19">
            <path d="M1 1h13l-5 7v9l-3-2V8z" fill="none" stroke="#444" />
            <circle cx="10" cy="13" r="3.5" fill="none" stroke="#444" />
          </svg>
        </div>
        <div className="w-[429px] shrink-0">Total: 84 files</div>
        <div className="w-[446px] shrink-0">Selected: None</div>
        <div className="text-[#999]">Plug-in</div>
      </div>
    </div>
  );
};

const Check = ({ on }: { on?: boolean }) => (
  <div className="w-[13px] h-[13px] border border-[#333] bg-white shrink-0 flex items-center justify-center">
    {on && (
      <svg width="11" height="11" viewBox="0 0 11 11">
        <path d="M1.5 5.5l3 3 5-7" fill="none" stroke="#333" strokeWidth="1.2" />
      </svg>
    )}
  </div>
);
const Opt = ({ on, children, w }: { on?: boolean; children: React.ReactNode; w: string }) => (
  <div className={"flex items-center gap-[3px] h-[16px] shrink-0 " + w}>
    <Check on={on} />
    <span className="whitespace-nowrap">{children}</span>
  </div>
);

const tree: { label: string; lvl: 0 | 1; icon: string; exp?: boolean; active?: boolean }[] = [
  { label: "Text Comparison", lvl: 0, icon: "apples", exp: true },
  { label: "Advanced", lvl: 1, icon: "advanced" },
  { label: "Directory Comparison", lvl: 0, icon: "dirs", exp: true },
  { label: "Filters", lvl: 1, icon: "filters" },
  { label: "Other", lvl: 1, icon: "otherFolder" },
  { label: "Binary Comparison", lvl: 0, icon: "binary" },
  { label: "Table Comparison", lvl: 0, icon: "table" },
  { label: "Text Merge", lvl: 0, icon: "merge", exp: true },
  { label: "Colors", lvl: 1, icon: "colors" },
  { label: "Document Types", lvl: 0, icon: "docTypes" },
  { label: "Display", lvl: 0, icon: "display", exp: true },
  { label: "Colors", lvl: 1, icon: "colors" },
  { label: "View Filters", lvl: 1, icon: "viewFilters", active: true },
  { label: "Dir Columns", lvl: 1, icon: "columns" },
  { label: "Word Wrap", lvl: 0, icon: "wrap" },
  { label: "File Editing", lvl: 0, icon: "edit" },
  { label: "HTML", lvl: 0, icon: "html" },
  { label: "Tools", lvl: 0, icon: "tools", exp: true },
  { label: "Plug-ins", lvl: 1, icon: "plug" },
  { label: "Misc", lvl: 0, icon: "misc", exp: true },
  { label: "Messages", lvl: 1, icon: "messages" },
  { label: "Global", lvl: 0, icon: "global", exp: true },
  { label: "Keyboard", lvl: 1, icon: "keyboard" },
  { label: "Logging", lvl: 1, icon: "logging" },
  { label: "Other", lvl: 1, icon: "otherGreen" },
];

const TreeGuides = () => {
  const lines: string[] = ["M13 10V389"];
  let lastParent = 0;
  tree.forEach((t, i) => {
    const y = i * 18 + 10;
    if (t.lvl === 0) {
      lastParent = i;
      lines.push(`M13 ${y}H24`);
    } else {
      lines.push(`M33 ${lastParent * 18 + 14}V${y}H43`);
    }
  });
  return (
    <svg className="absolute left-0 top-0" width="200" height="470">
      <path d={lines.join("")} fill="none" stroke="#777" strokeDasharray="1 1" />
    </svg>
  );
};

const Btn = ({ children, w = "w-[117px]" }: { children: React.ReactNode; w?: string }) => (
  <div className={"h-[24px] bg-[#e1e1e1] border border-[#adadad] flex items-center justify-center shrink-0 " + w}>{children}</div>
);
const Combo = ({ v }: { v: string }) => (
  <div className="w-[327px] h-[22px] bg-white border border-[#7a7a7a] flex items-center pl-[4px] pr-[5px] justify-between">
    <span>{v}</span>
    <ChevronDown size={13} className="text-[#555]" />
  </div>
);

const Dialog = () => (
  <div className="absolute left-[520px] top-[274px] w-[880px] h-[608px] bg-[#f0f0f0] border border-[#888] shadow-[2px_2px_6px_rgba(0,0,0,0.35)] flex flex-col text-[#222]">
    <div className="h-[26px] bg-[#fafafa] flex items-center justify-between pl-[4px] pr-[10px] shrink-0">
      <span className="text-[#999]">Options for session "edptest"</span>
      <X size={15} className="text-[#777]" strokeWidth={1.2} />
    </div>
    <div className="flex pl-[8px] pt-[10px] shrink-0 h-[531px]">
      <div className="w-[204px] shrink-0 flex flex-col">
        <div className="h-[479px] bg-white border border-[#9a9a9a] relative">
          <TreeGuides />
          {tree.map((t, i) => (
            <div key={i} className={"h-[18px] flex items-center relative " + (t.lvl === 0 ? "pl-[23px]" : "pl-[42px]")}>
              {t.exp && (
                <div className="absolute left-[8px] top-[4px] w-[10px] h-[10px] bg-white border border-[#999] flex items-center justify-center">
                  <div className="w-[6px] h-px bg-[#333]" />
                </div>
              )}
              <div className="w-[18px] h-[18px] flex items-center justify-center shrink-0 bg-white">
                <Mini n={t.icon} />
              </div>
              <div className={"ml-[1px] px-[2px] " + (t.active ? "bg-[#f0f0f0]" : "")}>{t.label}</div>
            </div>
          ))}
        </div>
        <div className="flex mt-[8px] gap-[1px]">
          <div className="w-[177px] h-[23px] bg-white border border-[#bbb] flex items-center pl-[6px] text-[#666]">Find an option</div>
          <div className="w-[25px] h-[23px] bg-[#dfe3ea] border border-[#ccd] flex items-center justify-center">
            <svg width="18" height="18" viewBox="0 0 18 18">
              <circle cx="11" cy="7" r="5" fill="#dcecf8" stroke="#44647e" strokeWidth="1.5" />
              <path d="M7 11l-5 5" stroke="#44647e" strokeWidth="2.5" />
            </svg>
          </div>
        </div>
      </div>
      <div className="w-[656px] h-[509px] ml-[4px] border border-[#a0a0a0] flex flex-col shrink-0">
        <div className="h-[23px] mx-[3px] mt-[1px] bg-[#646464] text-white flex items-center pl-[5px] shrink-0">Display Options :: View Filters</div>
        <div className="flex items-center mt-[14px] ml-[14px] mr-[10px] h-[16px]">
          <b className="whitespace-nowrap">File comparison filter</b>
          <div className="flex-1 h-[2px] bg-[#e2e2e2] ml-[6px]" />
        </div>
        <div className="mt-[6px] ml-[17px] h-[16px] leading-[16px]">NOTE: To enable the file comparison view filter, use the View | Use Status View Filter command.</div>
        <div className="flex mt-[15px] ml-[40px]">
          <Opt w="w-[193px]">View <u>i</u>dentical segments</Opt>
          <Opt w="w-[203px]" on>View c<u>h</u>anged segments</Opt>
          <Opt w="" on>View <u>m</u>oved segments</Opt>
        </div>
        <div className="flex mt-[13px] ml-[40px]">
          <Opt w="w-[193px]" on>View <u>a</u>dded segments</Opt>
          <Opt w="w-[203px]" on>View <u>d</u>eleted segments</Opt>
        </div>
        <div className="flex items-center mt-[12px] ml-[93px] h-[25px]">
          <span className="w-[434px] whitespace-nowrap shrink-0">Number of identical <u>c</u>ontext lines shown with added/deleted/changed segments:</span>
          <div className="w-[70px] h-[25px] bg-white border border-[#7a7a7a] flex items-center justify-between pl-[5px] pr-[2px]">
            <span>0</span>
            <div className="flex flex-col gap-px">
              <div className="w-[14px] h-[10px] bg-[#eee] border border-[#bbb] flex items-center justify-center">
                <div className="w-0 h-0 border-x-[3px] border-x-transparent border-b-[3px] border-b-black" />
              </div>
              <div className="w-[14px] h-[10px] bg-[#eee] border border-[#bbb] flex items-center justify-center">
                <Caret />
              </div>
            </div>
          </div>
        </div>
        <div className="flex items-center mt-[16px] ml-[14px] mr-[10px] h-[16px]">
          <b className="whitespace-nowrap">Directory comparison filters</b>
          <div className="flex-1 h-[2px] bg-[#e2e2e2] ml-[6px]" />
        </div>
        <div className="mt-[8px] ml-[17px] leading-[15px] h-[30px] whitespace-nowrap">
          NOTE: To enable the directory comparison view filters, use the View | Use Status View Filter and View | Use Path View
          <br />
          Filter commands.
        </div>
        <fieldset className="ml-[23px] w-[612px] mt-[10px] border-2 border-[#e4e4e4] pl-[15px] pt-[14px] pb-[12px] h-[90px] min-w-0">
          <legend className="ml-[6px] px-[2px] leading-[16px]">Status filter</legend>
          <div className="flex">
            <Opt w="w-[193px]">V<u>i</u>ew identical items</Opt>
            <Opt w="w-[203px]" on>View chan<u>g</u>ed items</Opt>
            <Opt w="" on>View <u>n</u>ewer/older items</Opt>
          </div>
          <div className="flex mt-[12px]">
            <Opt w="w-[193px]" on>View add<u>e</u>d items</Opt>
            <Opt w="w-[203px]" on>Vie<u>w</u> deleted items</Opt>
          </div>
        </fieldset>
        <fieldset className="ml-[23px] w-[612px] mt-[6px] border-2 border-[#e4e4e4] pt-[8px] h-[114px] min-w-0">
          <legend className="ml-[6px] px-[2px] leading-[16px]">Path filter</legend>
          <div className="flex items-center">
            <div className="w-[233px] text-right mr-[10px] shrink-0">Include <u>p</u>atterns (comma-separated):</div>
            <Combo v="*" />
          </div>
          <div className="flex items-center mt-[9px]">
            <div className="w-[233px] text-right mr-[10px] shrink-0">Exc<u>l</u>ude patterns (comma-separated):</div>
            <Combo v="*.yml" />
          </div>
          <div className="mt-[10px] ml-[68px] leading-[16px]">Use any wildcards with * and ? symbols, e.g. d?n* or *.cpp.</div>
        </fieldset>
        <div className="flex justify-end mt-[11px] mr-[6px]">
          <div className="w-[136px] h-[24px] bg-[#cfcfcf] border border-[#c4c4c4] flex items-center justify-center text-[#888]">Apply</div>
        </div>
      </div>
    </div>
    <div className="mx-[8px] h-[46px] border border-[#a8a8a8] flex items-center pl-[16px] pr-[6px] shrink-0">
      <svg width="40" height="14" viewBox="0 0 40 14" className="shrink-0">
        <path d="M0 7l7-6v3h10v6H7v3z" fill="#a8a8a8" />
        <path d="M40 7l-7-6v3H23v6h10v3z" fill="#a8a8a8" />
      </svg>
      <div className="ml-[154px] flex gap-[11px]">
        <Btn>OK</Btn>
        <Btn>Cancel</Btn>
        <Btn>E<u>x</u>port To File...</Btn>
        <Btn>I<u>m</u>port From File...</Btn>
        <Btn w="w-[136px] relative pr-[18px]">
          <span><u>R</u>eset To Default</span>
          <div className="absolute right-[7px] top-[9px]">
            <Caret />
          </div>
        </Btn>
      </div>
    </div>
  </div>
);

const Win = () => (
  <svg width="18" height="18" viewBox="0 0 18 18">
    <path d="M0 2.5L7.3 1.4v7.2H0zM8.3 1.3L18 0v8.6H8.3zM0 9.5h7.3v7.2L0 15.6zM8.3 9.5H18V18l-9.7-1.3z" fill="#fff" />
  </svg>
);

const TaskIcon = ({ children, bar, active }: { children: React.ReactNode; bar?: boolean; active?: boolean }) => (
  <div className={"w-[49px] h-full flex items-center justify-center relative shrink-0 " + (active ? "bg-[#3b4954]" : "")}>
    {children}
    {bar && <div className="absolute bottom-0 left-[4px] right-[4px] h-[2px] bg-[#9fc6e8]" />}
  </div>
);

export default function App() {
  return (
    <div className="w-[1920px] h-[1200px] overflow-hidden relative bg-[#ccd6ee] flex flex-col font-['Roboto',sans-serif] text-[12px] leading-none text-[#222]">
      <div className="h-[32px] flex items-center pl-[12px] shrink-0">
        <Apples s={19} />
        <span className="ml-[17px] text-[#4a4a56] tracking-[-0.15px]">edptest ( TheK8sBook1 &nbsp;|&nbsp; TheK8sBook2 ) - ExamDiff Pro, Master Edition (1-User License)</span>
        <div className="ml-auto flex items-center gap-[32px] pr-[18px] text-[#555]">
          <Minus size={12} />
          <svg width="10" height="12" viewBox="0 0 10 12">
            <path d="M3 3V.5h6.5V7H7M.5 3.5H7V11H.5z" fill="none" stroke="#555" />
          </svg>
          <X size={15} />
        </div>
      </div>
      <div className="h-[25px] flex items-center text-[#111] shrink-0 relative pl-[11px]">
        <span className="w-[74px]"><u>D</u>irectories</span>
        <span className="w-[38px]"><u>E</u>dit</span>
        <span className="w-[44px]"><u>V</u>iew</span>
        <span className="w-[76px]"><u>N</u>avigation</span>
        <span className="w-[54px]"><u>S</u>earch</span>
        <span className="w-[45px]"><u>T</u>ools</span>
        <span><u>H</u>elp</span>
      </div>
      <div className="h-[34px] flex items-center pl-[10px] shrink-0">
        <Gripper />
        <div className="w-[7px]" />
        <Tool n="apples" />
        <Tool n="refresh" />
        <Tool n="docRefresh" />
        <Tool n="folderUp" />
        <Sep />
        <Tool n="panesH" />
        <Tool n="panesV" />
        <Sep />
        <Tool n="pencil" />
        <Tool n="warnSave" />
        <Tool n="warnSave2" />
        <Tool n="printer" />
        <Tool n="preview" />
        <Sep />
        <Tool n="arrowR" />
        <Tool n="arrowL" />
        <Sep />
        <Tool n="paneGreen" />
        <Tool n="paneRed" />
        <Tool n="paneBoth" hl />
        <Tool n="paneBlue" />
        <Tool n="paneCheck" />
        <Tool n="paneSwap" hl />
        <div className="w-[5px]" />
        <Tool n="paneDoc" hl />
        <Tool n="speech" />
        <Tool n="funnelRed" hl />
        <div className="w-[6px]" />
        <Tool n="funnelMinus" hl />
        <Tool n="funnelDel" />
        <Tool n="funnelE" />
        <Tool n="funnelClock" />
        <Tool n="funnelO" />
        <Tool n="folderFunnel" hl />
        <div className="w-[9px]" />
        <Tool n="upTop" />
        <Tool n="up" />
        <Tool n="squareY" />
        <Tool n="squareO" />
        <Tool n="downY" />
        <Tool n="downBottomY" />
        <Sep />
        <Tool n="binoc" />
        <Tool n="binocR" />
        <Tool n="binocL" />
        <div className="w-[3px]" />
        <Tool n="folderFind" hl />
        <Tool n="foldersPlus" />
        <div className="w-[6px]" />
        <Tool n="puzzle" hl />
        <div className="w-[7px]" />
        <Tool n="gear" white />
        <div className="w-[7px]" />
        <Tool n="folderRefresh" />
        <Sep />
        <Tool n="grouping" />
        <span className="text-[#333] whitespace-nowrap">Grouping (None)</span>
        <div className="ml-[4px] scale-75">
          <Caret />
        </div>
        <div className="w-[6px]" />
        <Tool n="listTree" />
        <Tool n="expand1" />
        <Tool n="expand2" />
        <Tool n="expand3" />
        <div className="mt-[16px]">
          <Caret />
        </div>
      </div>
      <div className="h-[34px] flex items-center pl-[10px] shrink-0">
        <Gripper />
        <div className="w-[7px]" />
        <div className="w-[1535px] h-[22px] bg-white border border-[#7d8288] flex items-center shrink-0">
          <div className="w-[1514px] h-full bg-[#fdf3c4] flex items-center pl-[6px]">Diff 1: Changed 1 item (index)</div>
          <div className="flex-1 flex justify-center">
            <ChevronDown size={12} className="text-[#555]" />
          </div>
        </div>
        <div className="w-[13px] h-[13px] ml-[14px] bg-[#f4f6fb] border border-[#777] shrink-0" />
        <span className="ml-[6px]">Skip</span>
        <div className="ml-[9px] mt-[12px]">
          <Caret />
        </div>
        <div className="w-[14px]" />
        <Gripper />
        <div className="w-[5px]" />
        <div className="w-[149px] h-[22px] bg-[#eef2fa] border border-[#8a8f9c] flex items-center justify-between pl-[3px] pr-[4px] text-[#888] shrink-0">
          Quick path view filter
          <Caret />
        </div>
        <div className="ml-[3px]">{icons.funnelCheck}</div>
        <div className="ml-[5px]">{icons.funnelX}</div>
        <div className="ml-[2px] mt-[10px]">
          <Caret />
        </div>
      </div>
      <div className="flex flex-1 min-h-0 gap-[3px] mt-[1px] bg-[#ccd6ee]">
        <Panel side="l" />
        <Panel side="r" />
      </div>
      <div className="h-[20px] mt-[2px] bg-[#40508f] flex items-center pl-[3px] text-[#dfe4f4] shrink-0 pr-[2px]">
        <span className="tracking-[-0.12px]">4 differences: 4 files, with 3 different lines; 2 diff blocks shown (view filter was used)</span>
        <div className="ml-auto flex gap-[5px] h-[17px]">
          <div className="w-[64px] bg-[#c0a8b8] text-[#a02858] flex items-center justify-center">Added(0,0)</div>
          <div className="w-[68px] bg-[#ccd2f2] text-[#2a2ab0] flex items-center justify-center">Deleted(0,0)</div>
          <div className="w-[77px] bg-[#ffffc8] text-[#555520] flex items-center justify-center">Changed(4,3)</div>
          <div className="w-[39px] bg-[#a8d8f8] text-[#5a48c0] flex items-center justify-center">Newer</div>
          <div className="w-[33px] bg-[#ead8c0] text-[#a83030] flex items-center justify-center">Older</div>
        </div>
      </div>
      <div className="h-[40px] bg-[#1c2b38] flex items-center shrink-0 text-[#e8e8e8]">
        <div className="w-[48px] h-full flex items-center justify-center shrink-0">
          <Win />
        </div>
        <div className="w-[48px] h-full flex items-center justify-center shrink-0">
          <svg width="24" height="24" viewBox="0 0 24 24">
            <circle cx="13" cy="10" r="7.5" fill="none" stroke="#fff" strokeWidth="2" />
            <path d="M8 16l-5 6" stroke="#fff" strokeWidth="2.2" />
          </svg>
        </div>
        <TaskIcon>
          <svg width="24" height="24" viewBox="0 0 24 24">
            <path d="M3 3h18v18H3z" fill="#f8d35c" />
            <path d="M3 8h18v13H3z" fill="#eab73c" />
            <rect x="8" y="14" width="8" height="7" fill="#5aaad8" />
          </svg>
        </TaskIcon>
        <TaskIcon>
          <svg width="24" height="24" viewBox="0 0 24 24">
            <path d="M2 13C2 6 7 2 13 2c6 0 10 4 9 10H9c0 5 7 7 12 4-2 5-7 6-11 5C5 20 2 18 2 13z" fill="#1f9ad8" />
            <path d="M9 12c0-3 2-4 5-4s5 1 8 4z" fill="#4fd16a" />
          </svg>
        </TaskIcon>
        <TaskIcon bar>
          <svg width="24" height="24" viewBox="0 0 24 24">
            <circle cx="12" cy="13" r="9.5" fill="#f5761f" />
            <circle cx="12" cy="13" r="5" fill="#7b3fd0" />
            <path d="M5 6c1-3 3-4 5-5 0 2 1 3 3 4-4 0-6 1-8 1z" fill="#ffcb2e" />
          </svg>
        </TaskIcon>
        <TaskIcon>
          <svg width="24" height="24" viewBox="0 0 24 24">
            <circle cx="12" cy="13" r="9" fill="#1a6ac8" />
            <circle cx="12" cy="13" r="4.5" fill="#b8dcf8" />
            <path d="M9 4c3-3 7-3 9 0" stroke="#36a8e8" strokeWidth="2" fill="none" />
          </svg>
        </TaskIcon>
        <TaskIcon>
          <svg width="24" height="24" viewBox="0 0 24 24">
            <rect x="8" y="2" width="14" height="20" fill="#21a366" />
            <rect x="2" y="6" width="12" height="12" fill="#107c41" />
            <text x="8" y="15.5" textAnchor="middle" fontSize="10" fontWeight="700" fill="#fff">X</text>
          </svg>
        </TaskIcon>
        <TaskIcon>
          <svg width="24" height="24" viewBox="0 0 24 24">
            <rect x="8" y="2" width="14" height="20" fill="#3a82d8" />
            <rect x="2" y="6" width="13" height="12" fill="#185abd" />
            <text x="8.5" y="15.5" textAnchor="middle" fontSize="10" fontWeight="700" fill="#fff">W</text>
          </svg>
        </TaskIcon>
        <TaskIcon>
          <svg width="24" height="24" viewBox="0 0 24 24">
            <path d="M17 2l5 2.5v15L17 22 7 13l-4 3-2-1.5V9.5L3 8l4 3zM17 7l-6 5 6 5z" fill="#2a8ae0" />
          </svg>
        </TaskIcon>
        <TaskIcon bar>
          <svg width="24" height="24" viewBox="0 0 24 24">
            <rect x="3" y="1" width="18" height="22" fill="#d8e4f8" stroke="#7a90c8" />
            <rect x="7" y="1" width="10" height="8" fill="#3a50a8" />
            <rect x="5" y="12" width="14" height="11" fill="#e8b8a8" />
            <path d="M7 15h10M7 18h10" stroke="#333" />
          </svg>
        </TaskIcon>
        <TaskIcon bar>
          <svg width="24" height="24" viewBox="0 0 24 24">
            <rect x="3" y="1" width="18" height="22" fill="#f4f4f4" />
            <rect x="3" y="1" width="18" height="4" fill="#1a5ab0" />
            <rect x="9" y="3" width="6" height="12" fill="#1a5ab0" />
            <path d="M7 23l10-9" stroke="#d89030" strokeWidth="3" />
          </svg>
        </TaskIcon>
        <TaskIcon bar>
          <svg width="24" height="24" viewBox="0 0 24 24">
            <path d="M12 1l11 11-11 11L1 12z" fill="#e8e8f0" />
            <path d="M12 1l11 11H12z" fill="#e8a030" />
            <path d="M1 12h11v11z" fill="#4a80d0" />
            <path d="M12 12h11L12 23z" fill="#4aa050" />
          </svg>
        </TaskIcon>
        <TaskIcon bar active>
          <Apples s={26} />
        </TaskIcon>
        <div className="ml-auto flex items-center h-full">
          <svg width="26" height="28" viewBox="0 0 26 28">
            <circle cx="15" cy="8" r="6" fill="#e83a2a" />
            <path d="M3 18a6 6 0 0 1 6-6 7 7 0 0 1 13 3 5 5 0 0 1 0 11H6a4 4 0 0 1-3-8z" fill="#a8c8f0" />
            <path d="M8 3l2 7-6 3z" fill="#f5b030" />
          </svg>
          <span className="ml-[7px] text-[14px]">5°C&nbsp; Stark bewölkt</span>
          <ChevronUp size={15} className="ml-[23px]" />
          <svg width="12" height="18" viewBox="0 0 12 18" className="ml-[8px]">
            <path d="M7 1l3 6-5 10-3-1 2-8z" fill="#bbb" />
          </svg>
          <svg width="12" height="18" viewBox="0 0 12 18" className="ml-[12px]">
            <path d="M3 1h6v9H3zM2 10h8v7H2z" fill="none" stroke="#ddd" />
          </svg>
          <svg width="16" height="16" viewBox="0 0 16 16" className="ml-[9px]">
            <path d="M5 1h10v9H5zM1 6h8v7H1zM3 15h4" fill="#1c2b38" stroke="#ddd" />
          </svg>
          <svg width="16" height="16" viewBox="0 0 16 16" className="ml-[5px]">
            <path d="M1 6h3l4-4v12l-4-4H1zM10 5a4 4 0 0 1 0 6M12 3a7 7 0 0 1 0 10" fill="none" stroke="#ddd" />
          </svg>
          <svg width="22" height="16" viewBox="0 0 22 16" className="ml-[14px]">
            <rect x="0.5" y="0.5" width="21" height="15" fill="none" stroke="#ddd" />
            <path d="M3 4h16M3 7h16M5 11h12" stroke="#ddd" strokeDasharray="1.5 1" />
          </svg>
          <div className="w-[74px] flex flex-col items-center gap-[6px] text-[12px] shrink-0">
            <span>06:18</span>
            <span>06.10.2024</span>
          </div>
          <svg width="18" height="20" viewBox="0 0 18 20" className="ml-[9px] mr-[22px]">
            <path d="M1 1h16v14h-6l-2 3-2-3H1z" fill="none" stroke="#ddd" />
          </svg>
        </div>
      </div>
      <Dialog />
    </div>
  );
}
